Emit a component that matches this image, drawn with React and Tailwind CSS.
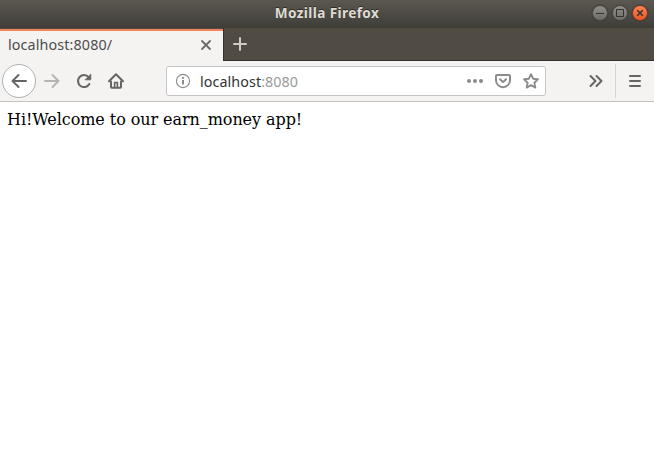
function WindowButton({ close, children }) {
  return (
    <span
      className={
        "flex h-4 w-4 items-center justify-center rounded-full border shadow-[0_0_0_0.5px_#3a3934] " +
        (close
          ? "border-[#7a3c22] bg-linear-to-b from-[#f98258] to-[#ea5620]"
          : "border-[#4a4943] bg-linear-to-b from-[#918e87] to-[#6e6c66]")
      }
    >
      <svg className="h-4 w-4 shrink-0" viewBox="0 0 16 16" fill="none" stroke="#33322d">
        {children}
      </svg>
    </span>
  );
}

function Icon({ className, children }) {
  return (
    <svg
      className={"h-4 w-4 shrink-0 " + className}
      viewBox="0 0 16 16"
      fill="none"
      stroke="currentColor"
      strokeWidth="2"
      strokeLinecap="round"
      strokeLinejoin="round"
    >
      {children}
    </svg>
  );
}

function TitleBar() {
  return (
    <header className="grid h-7 grid-cols-[1fr_auto_1fr] items-center bg-linear-to-b from-[#5b5850] to-[#3e3d38]">
      <span />
      <h1 className="w-[107px] whitespace-nowrap pb-0.5 text-center font-['Noto_Sans',sans-serif] text-[13.6px] leading-5 font-bold tracking-[0.4px] text-[#dfdbd2] [text-shadow:0_-1px_0_#2d2c28]">
        Mozilla Firefox
      </h1>
      <div className="flex justify-end gap-1 pr-[6px] pb-[2px]">
        <WindowButton>
          <path d="M4 8.5h8" />
        </WindowButton>
        <WindowButton>
          <path d="M4.5 4.5h7v7h-7z" />
        </WindowButton>
        <WindowButton close>
          <path d="M5.3 5.3l5.4 5.4M10.7 5.3l-5.4 5.4" strokeWidth="1.6" />
        </WindowButton>
      </div>
    </header>
  );
}

function TabBar() {
  return (
    <div className="flex h-[33px] bg-[#504c44]">
      <div className="mt-px flex w-[223px] items-center justify-between border-t-2 border-[#f0835a] bg-[#f4f3f2] pr-[9px] pl-2">
        <span className="pb-[3px] text-[14.3px] leading-5 tracking-[0.13px] text-[#4c4c4c]">
          localhost:8080/
        </span>
        <Icon className="mb-[2px] text-[#6b6b69]">
          <path d="M4 4l8 8M12 4l-8 8" strokeWidth="1.8" />
        </Icon>
      </div>
      <div className="flex flex-1 items-center border-b border-l border-[#33312c] pl-2">
        <Icon className="text-[#cfccc6]">
          <path d="M8 2v12M2 8h12" />
        </Icon>
      </div>
    </div>
  );
}

function AddressBar() {
  return (
    <div className="ml-[42px] flex h-[30px] w-[380px] items-center rounded-[3px] border border-[#c5c4c2] bg-white pl-2 text-[#8b8b8a]">
      <Icon className="">
        <circle cx="8" cy="8" r="6.6" strokeWidth="1.1" />
        <path d="M8 7v4.5" strokeLinecap="butt" />
        <circle cx="8" cy="4.9" r="1.1" fill="currentColor" stroke="none" />
      </Icon>
      <span className="ml-[9px] flex-1 pt-px text-[14.3px] leading-5 tracking-[0.08px] text-[#333]">
        localhost<span className="text-[#9a9a9a]">:8080</span>
      </span>
      <div className="flex items-center gap-3 pr-[6px]">
        <Icon className="">
          <g fill="currentColor" stroke="none">
            <circle cx="2" cy="8" r="2" />
            <circle cx="8" cy="8" r="2" />
            <circle cx="14" cy="8" r="2" />
          </g>
        </Icon>
        <Icon className="">
          <path d="M2 2h12q1 0 1 1v4.2a7 7 0 0 1-14 0V3q0-1 1-1z" />
          <path d="M5 6.2L8 9.1l3-2.9" />
        </Icon>
        <Icon className="">
          <path
            d="M8 1.2l2.1 4.5 4.8.6-3.5 3.4.9 4.9L8 12.2l-4.3 2.4.9-4.9L1.1 6.3l4.8-.6z"
            strokeWidth="1.9"
          />
        </Icon>
      </div>
    </div>
  );
}

function Toolbar() {
  return (
    <div className="flex h-[41px] items-center border-b border-[#c4c3c0] bg-[#f4f3f2] pl-[2px] text-[#656562]">
      <div className="flex h-[34px] w-[34px] items-center justify-center rounded-full border border-[#b0b0ae] bg-white">
        <Icon className="">
          <path d="M15 8H1.5M7.5 2l-6 6 6 6" />
        </Icon>
      </div>
      <Icon className="ml-2 text-[#b5b4b2]">
        <path d="M1 8h13.5M8.5 2l6 6-6 6" />
      </Icon>
      <Icon className="ml-4">
        <path d="M12.6 4.2A6 6 0 1 0 13.3 11" />
        <path d="M14.8 1.4v5.4H9.4z" fill="currentColor" strokeWidth="0.8" />
      </Icon>
      <Icon className="ml-4">
        <path d="M1 8.2L8 1.2l7 7" />
        <path d="M3 8.5V14q0 .8.8.8h8.4q.8 0 .8-.8V8.5" />
        <path d="M6.6 14V9.6h2.8V14" strokeWidth="1.6" />
      </Icon>
      <AddressBar />
      <Icon className="ml-[42px]">
        <path d="M2.5 3l5 5-5 5M8.5 3l5 5-5 5" />
      </Icon>
      <div className="ml-[11px] flex h-[34px] items-center border-l border-[#d5d4d2] pl-[11px]">
        <Icon className="">
          <path d="M3 3h10M3 8h10M3 13h10" />
        </Icon>
      </div>
    </div>
  );
}

export default function App() {
  return (
    <div className="flex h-screen flex-col overflow-hidden bg-white font-['Noto_Sans',sans-serif]">
      <TitleBar />
      <TabBar />
      <Toolbar />
      <main className="flex-1 px-[7px] pt-2 font-['DejaVu_Serif',serif] text-base leading-[19px] tracking-[-0.07px] text-black">
        Hi!Welcome to our earn_money app!
      </main>
    </div>
  );
}
